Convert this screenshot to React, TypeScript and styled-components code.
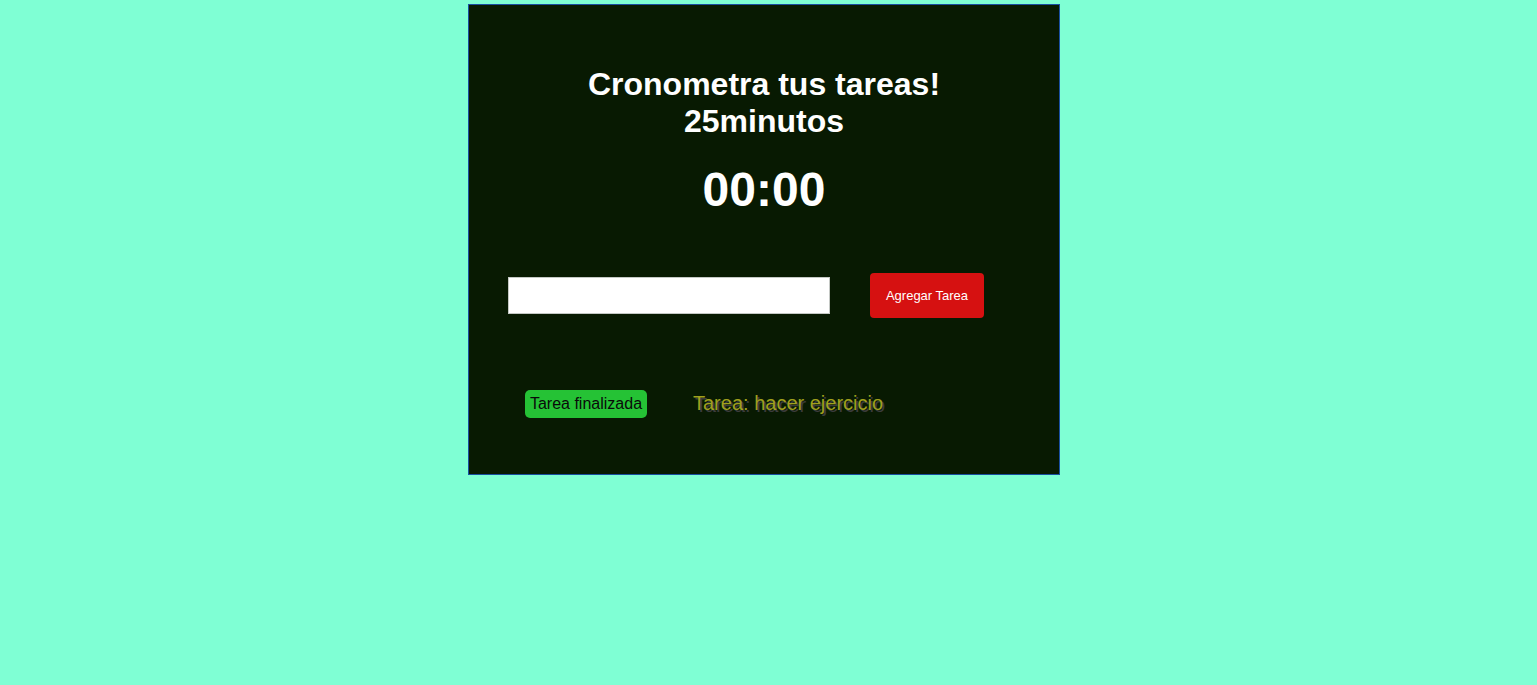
import React from "react";
import styled, { createGlobalStyle } from "styled-components";

const GlobalStyle = createGlobalStyle`
  html, body {
    margin: 0;
    padding: 0;
    background: #7fffd4;
    font-family: "Liberation Sans", Arial, sans-serif;
  }
`;

const Page = styled.div`
  display: flex;
  justify-content: center;
  padding: 4px 9px 0 0;
  min-height: 685px;
  box-sizing: border-box;
`;

const Card = styled.div`
  width: 592px;
  height: 471px;
  box-sizing: border-box;
  background: #081a02;
  border: 1px solid #1a4fa0;
  padding: 61px 0 0 0;
  display: flex;
  flex-direction: column;
`;

const Title = styled.h1`
  margin: 0;
  font-size: 32px;
  line-height: 37px;
  font-weight: bold;
  color: #ffffff;
  text-align: center;
`;

const Timer = styled.div`
  margin-top: 22px;
  font-size: 48px;
  line-height: 55px;
  font-weight: bold;
  color: #ffffff;
  text-align: center;
`;

const FormRow = styled.div`
  margin-top: 56px;
  padding-left: 39px;
  display: flex;
  align-items: center;
  gap: 40px;
  height: 45px;
`;

const TaskInput = styled.input`
  width: 322px;
  height: 37px;
  box-sizing: border-box;
  border: 1px solid #c4c8c4;
  background: #ffffff;
  padding: 0 6px;
  font-family: "Liberation Sans", Arial, sans-serif;
  font-size: 14px;
  outline: none;
`;

const AddButton = styled.button`
  width: 114px;
  height: 45px;
  border: none;
  border-radius: 4px;
  background: #d61111;
  color: #ffffff;
  font-family: "Liberation Sans", Arial, sans-serif;
  font-size: 13px;
  padding: 0;
  cursor: pointer;
`;

const TaskRow = styled.div`
  margin-top: 72px;
  padding-left: 56px;
  display: flex;
  align-items: center;
  gap: 46px;
`;

const DoneBadge = styled.button`
  height: 28px;
  width: 122px;
  box-sizing: border-box;
  border: none;
  border-radius: 5px;
  background: #25c235;
  color: #0a0a0a;
  font-family: "Liberation Sans", Arial, sans-serif;
  font-size: 16px;
  padding: 0;
  cursor: pointer;
`;

const TaskText = styled.span`
  font-size: 20px;
  color: #a0a01e;
  text-shadow: 2px 2px 0 #3c3c3c;
  margin-top: -2px;
`;

export default function App() {
  return (
    <>
      <GlobalStyle />
      <Page>
        <Card>
          <Title>
            Cronometra tus tareas!
            <br />
            25minutos
          </Title>
          <Timer>00:00</Timer>
          <FormRow>
            <TaskInput type="text" />
            <AddButton>Agregar Tarea</AddButton>
          </FormRow>
          <TaskRow>
            <DoneBadge>Tarea finalizada</DoneBadge>
            <TaskText>Tarea: hacer ejercicio</TaskText>
          </TaskRow>
        </Card>
      </Page>
    </>
  );
}
